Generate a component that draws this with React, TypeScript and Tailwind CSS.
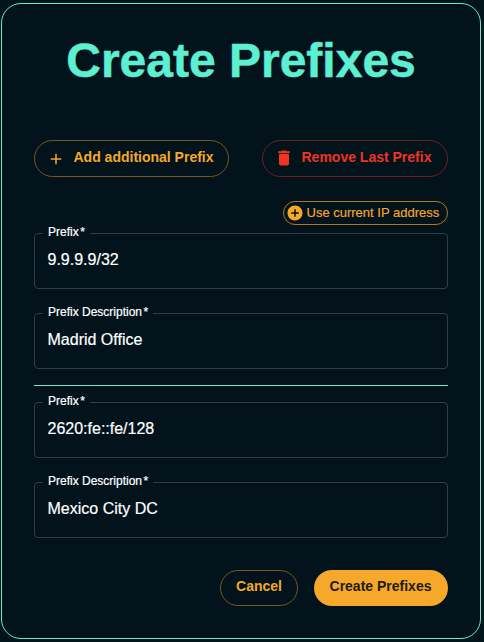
type FieldProps = { label: string; value: string };

function Field({ label, value }: FieldProps) {
  return (
    <div className="relative flex h-14 items-center rounded border border-[#333f47] px-[12.5px] pb-0.5">
      <label className="absolute -top-[9px] left-2 bg-[#02131c] pr-[5px] pl-[5px] text-[12px] leading-[14px] whitespace-nowrap text-white [-webkit-text-stroke:0.2px_white]">
        {label}
        <span className="pl-[1.5px]">*</span>
      </label>
      <span className="text-[16px] leading-6 text-white [-webkit-text-stroke:0.2px_white]">{value}</span>
    </div>
  );
}

export default function App() {
  return (
    <div className="h-[642px] w-[484px] bg-[#02131c] pt-[3px] pl-px font-['Liberation_Sans',Arial,sans-serif]">
      <main className="flex h-[636px] w-[480px] flex-col rounded-[20px] border border-[#5eeed2] px-8 pt-[29px]">
        <h1 className="text-center text-[48px] leading-[56px] font-bold whitespace-nowrap text-[#5cefd2] [-webkit-text-stroke:0.5px_#5cefd2]">
          Create Prefixes
        </h1>

        <div className="mt-[51px] flex justify-between">
          <button className="flex h-[37px] w-[195px] items-center rounded-full border border-[#79571f] pb-0.5 pl-3 text-[14px] font-bold whitespace-nowrap text-[#f5a829]">
            <svg className="mt-0.5 mr-[8.5px] size-[18px] shrink-0" viewBox="0 0 24 24" fill="currentColor">
              <path d="M19 13h-6v6h-2v-6H5v-2h6V5h2v6h6z" />
            </svg>
            Add additional Prefix
          </button>
          <button className="flex h-[37px] w-[186px] items-center rounded-full border border-[#751c1d] pb-0.5 pl-[11px] text-[14px] font-bold whitespace-nowrap text-[#ef3421]">
            <svg className="mt-px mr-[7.5px] size-5 shrink-0" viewBox="0 0 24 24" fill="currentColor">
              <path d="M6 19c0 1.100.9 2 2 2h8c1.100 0 2-.9 2-2V7H6zM19 4h-3.500l-1-1h-5l-1 1H5v2h14z" />
            </svg>
            Remove Last Prefix
          </button>
        </div>

        <div className="mt-6 flex justify-end">
          <button className="flex h-6 w-[165px] items-center rounded-full border border-[#ad7a20] pl-[2px] text-[13px] whitespace-nowrap text-[#f5a829] [-webkit-text-stroke:0.15px_#f5a829]">
            <svg className="mr-[2.5px] size-[18px] shrink-0" viewBox="0 0 24 24" fill="currentColor">
              <path d="M12 2C6.480 2 2 6.480 2 12s4.480 10 10 10 10-4.480 10-10S17.520 2 12 2m5 11h-4v4h-2v-4H7v-2h4V7h2v4h4z" />
            </svg>
            Use current IP address
          </button>
        </div>

        <section className="mt-2 flex flex-col gap-6">
          <Field label="Prefix" value="9.9.9.9/32" />
          <Field label="Prefix Description" value="Madrid Office" />
        </section>
        <hr className="my-4 border-t border-[#6be8d2]" />
        <section className="flex flex-col gap-6">
          <Field label="Prefix" value="2620:fe::fe/128" />
          <Field label="Prefix Description" value="Mexico City DC" />
        </section>

        <div className="mt-8 flex justify-end gap-4">
          <button className="h-9 w-[78px] rounded-full border border-[#79571f] pb-[3px] text-[14px] font-bold whitespace-nowrap text-[#f5a829]">
            Cancel
          </button>
          <button className="h-9 w-[134px] rounded-full bg-[#f5a829] pr-px pb-[3px] text-[14px] font-bold whitespace-nowrap text-[#211b0c]">
            Create Prefixes
          </button>
        </div>
      </main>
    </div>
  );
}
